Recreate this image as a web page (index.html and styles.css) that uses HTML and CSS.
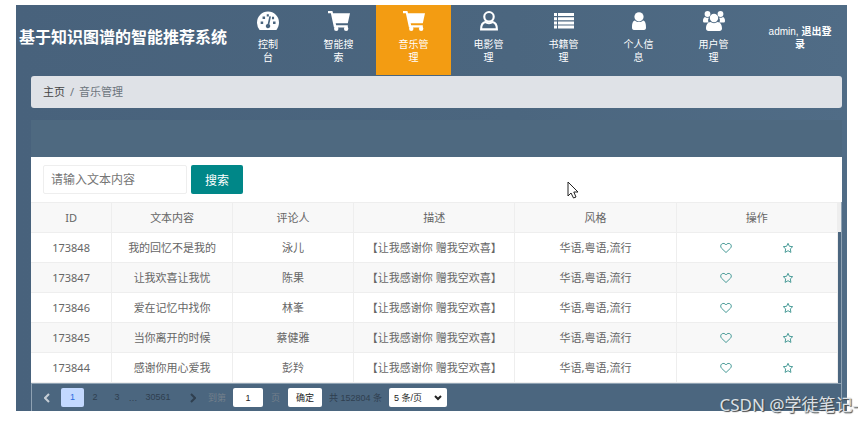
FILE: index.html
```
<!DOCTYPE html>
<html lang="zh-CN">
  <head>
    <meta charset="UTF-8" />
    <title>基于知识图谱的智能推荐系统</title>
    <link rel="stylesheet" href="styles.css">
  </head>
  <body>
    <svg class="sprite">
      <symbol id="cart" viewBox="0 0 20 18">
        <path d="M0 0h4l.6 2H20l-2 9H7l.4 1.8H18V15H5.400L2.600 2H0z"/>
        <circle cx="7.500" cy="16" r="2"/><circle cx="16.500" cy="16" r="2"/>
      </symbol>
      <symbol id="heart" viewBox="0 0 12 11">
        <path d="M6 10 1.600 5.800C.2 4.300.6 2.400 1.700 1.500 3.200.4 5 .9 6 2.400 7 .9 8.800.4 10.300 1.500c1.100.9 1.500 2.800.1 4.300z"/>
      </symbol>
      <symbol id="star" viewBox="0 0 12 12">
        <path d="m6 1.300 1.400 3 3.300.4-2.400 2.200.6 3.500L6 8.700l-2.900 1.700.6-3.500-2.400-2.200 3.300-.4z"/>
      </symbol>
    </svg>

    <div class="app">
      <header class="header">
        <h1 class="brand">基于知识图谱的智能推荐系统</h1>
        <nav class="nav">
          <a href="#" class="nav-first">
            <svg viewBox="0 0 21 18"><path fill-rule="evenodd" d="M2.500 17.500A10.400 10.400 0 0 1 0 10.500a10.500 10.500 0 0 1 21 0c0 2.700-.9 5.100-2.500 7zM3.500 9.500v2.400h2.400V9.500zM5.300 4.800v2.400h2.400V4.800zM15.300 9.500v2.400h2.400V9.500zM14.300 5v2.400h2V5zM9.300 2.600v2.200h2V2.600zM11.800 4.500l-1.600 7.300a2.100 2.100 0 1 0 1.600.4l1.500-7.400z"/></svg>
            <span>控制台</span>
          </a>
          <a href="#"><svg><use href="#cart"/></svg><span>智能搜索</span></a>
          <a href="#" class="active"><svg><use href="#cart"/></svg><span>音乐管理</span></a>
          <a href="#">
            <svg viewBox="0 0 18 19" class="line"><circle cx="9" cy="5.500" r="4.500"/><path d="M5.500 10.500C3 11 1.500 13.500 1.500 17.500h15c0-4-1.500-6.500-4-7-1.800 1.500-5.200 1.500-7 0z"/></svg>
            <span>电影管理</span>
          </a>
          <a href="#">
            <svg viewBox="0 0 22 18"><path d="M1 1h3v3H1zM5 1h16v3H5zM1 5.200h3v3H1zM5 5.200h16v3H5zM1 9.400h3v3H1zM5 9.400h16v3H5zM1 13.600h3v3H1zM5 13.600h16v3H5z"/></svg>
            <span>书籍管理</span>
          </a>
          <a href="#">
            <svg viewBox="0 -1 18 20"><circle cx="9" cy="4.800" r="4.600"/><path d="M5 8.500C2.500 9 2 12 2 15.500 2 17 2.500 18 4 18h10c1.500 0 2-1 2-2.500 0-3.500-.5-6.500-3-7-2 2-6 2-8 0z"/></svg>
            <span>个人信息</span>
          </a>
          <a href="#">
            <svg viewBox="0 0 22 20"><circle cx="4.500" cy="3" r="2.900"/><circle cx="17.500" cy="3" r="2.900"/><circle cx="11" cy="7" r="4.200"/><path d="M2 6C.7 6.500 0 8 0 10c0 1 .7 1.500 1.500 1.500h4C4.800 9.500 5 8 6 6.800 4.500 7 3 6.800 2 6zM20 6c1.300.5 2 2 2 4 0 1-.7 1.500-1.500 1.500h-4c.7-2 .5-3.500-.5-4.700 1.500.2 3 0 4-.8zM7.500 11C4.500 11 3 14 3 17.500 3 19 4 20 5.500 20h11c1.500 0 2.500-1 2.500-2.500 0-3.500-1.500-6.500-4.500-6.500-2 1.500-5 1.500-7 0z"/></svg>
            <span>用户管理</span>
          </a>
        </nav>
        <div class="user">admin, <a href="#">退出登录</a></div>
      </header>

      <main class="content">
        <div class="breadcrumb">
          <a href="#">主页</a><span>/</span><span>音乐管理</span>
        </div>

        <section class="panel">
          <div class="panel-head"></div>
          <form class="search">
            <input type="text" placeholder="请输入文本内容" aria-label="文本内容" />
            <button type="button">搜索</button>
          </form>
          <div class="table-box">
            <table>
              <colgroup>
                <col class="c-id"><col class="c-name"><col class="c-name"><col class="c-wide"><col class="c-wide"><col class="c-wide">
              </colgroup>
              <thead>
                <tr>
                  <th>ID</th>
                  <th>文本内容</th>
                  <th>评论人</th>
                  <th>描述</th>
                  <th>风格</th>
                  <th>操作</th>
                </tr>
              </thead>
              <tbody>
                <tr>
                  <td>173848</td>
                  <td>我的回忆不是我的</td>
                  <td>泳儿</td>
                  <td>【让我感谢你 赠我空欢喜】</td>
                  <td>华语,粤语,流行</td>
                  <td><div class="ops"><button aria-label="喜欢"><svg><use href="#heart"/></svg></button><button aria-label="收藏"><svg><use href="#star"/></svg></button></div></td>
                </tr>
                <tr>
                  <td>173847</td>
                  <td>让我欢喜让我忧</td>
                  <td>陈果</td>
                  <td>【让我感谢你 赠我空欢喜】</td>
                  <td>华语,粤语,流行</td>
                  <td><div class="ops"><button aria-label="喜欢"><svg><use href="#heart"/></svg></button><button aria-label="收藏"><svg><use href="#star"/></svg></button></div></td>
                </tr>
                <tr>
                  <td>173846</td>
                  <td>爱在记忆中找你</td>
                  <td>林峯</td>
                  <td>【让我感谢你 赠我空欢喜】</td>
                  <td>华语,粤语,流行</td>
                  <td><div class="ops"><button aria-label="喜欢"><svg><use href="#heart"/></svg></button><button aria-label="收藏"><svg><use href="#star"/></svg></button></div></td>
                </tr>
                <tr>
                  <td>173845</td>
                  <td>当你离开的时候</td>
                  <td>蔡健雅</td>
                  <td>【让我感谢你 赠我空欢喜】</td>
                  <td>华语,粤语,流行</td>
                  <td><div class="ops"><button aria-label="喜欢"><svg><use href="#heart"/></svg></button><button aria-label="收藏"><svg><use href="#star"/></svg></button></div></td>
                </tr>
                <tr>
                  <td>173844</td>
                  <td>感谢你用心爱我</td>
                  <td>彭羚</td>
                  <td>【让我感谢你 赠我空欢喜】</td>
                  <td>华语,粤语,流行</td>
                  <td><div class="ops"><button aria-label="喜欢"><svg><use href="#heart"/></svg></button><button aria-label="收藏"><svg><use href="#star"/></svg></button></div></td>
                </tr>
              </tbody>
            </table>
            <div class="gutter"></div>
          </div>

          <div class="pager">
            <a href="#" class="arrow prev" aria-label="上一页"><svg viewBox="0 0 6 10"><path d="M5 1 1 5l4 4"/></svg></a>
            <a href="#" class="current">1</a>
            <a href="#">2</a>
            <a href="#">3</a>
            <span class="dots">…</span>
            <a href="#" class="last">30561</a>
            <a href="#" class="arrow next" aria-label="下一页"><svg viewBox="0 0 6 10"><path d="m1 1 4 4-4 4"/></svg></a>
            <label for="page" class="muted">到第</label>
            <input id="page" type="text" value="1" />
            <span class="muted">页</span>
            <button type="button">确定</button>
            <span class="total">共 152804 条</span>
            <span class="limit">
              <select aria-label="每页条数"><option>5 条/页</option></select>
              <svg viewBox="0 0 8 6"><path d="m1 1 3 3 3-3"/></svg>
            </span>
          </div>
        </section>
      </main>
    </div>

    <svg class="cursor" viewBox="0 0 12 18"><path d="M1 1v14l3-3 2.500 5 2.500-1-2.200-5H11z"/></svg>
    <div class="watermark">CSDN @学徒笔记-</div>
  </body>
</html>
```
FILE: styles.css
```
* {
  box-sizing: border-box;
}
body {
  margin: 5px 11px 10px 16px;
  background: #fff;
  font-family: "Noto Sans", "Noto Sans CJK SC", sans-serif;
  font-size: 11px;
  color: #666;
}
a {
  color: inherit;
  text-decoration: none;
}
button, input, select {
  font-family: inherit;
  margin: 0;
}
.sprite {
  display: none;
}
.app {
  background: linear-gradient(90deg, #48627c, #4b667f 60%, #506c86);
}

/* header */
.header {
  display: flex;
  height: 70px;
  color: #fff;
}
.brand {
  flex: 1;
  margin: 0;
  padding-left: 3px;
  font-size: 16px;
  line-height: 64px;
  white-space: nowrap;
}
.nav {
  display: flex;
}
.nav a {
  width: 75px;
  padding: 6px 20px 0;
  font-size: 10px;
  line-height: 13px;
  text-align: center;
}
.nav .nav-first {
  width: 66px;
}
.nav .active {
  background: #f39c12;
}
.nav svg {
  display: block;
  width: 22px;
  height: 20px;
  margin: 0 auto 7px;
  fill: #fff;
}
.nav span {
  display: block;
}
.nav .line {
  fill: none;
  stroke: #fff;
  stroke-width: 2;
}
.user {
  width: 96px;
  padding: 20px 14px 0 16px;
  font-family: "Liberation Sans", "Noto Sans CJK SC", sans-serif;
  font-size: 10px;
  line-height: 13px;
  text-align: center;
}
.user a {
  font-weight: bold;
}

/* content */
.content {
  padding: 1px 5px 0 15px;
}
.breadcrumb {
  display: flex;
  gap: 5px;
  height: 32px;
  padding: 0 12px;
  line-height: 32px;
  background: #dfe2e7;
  border-radius: 3px;
  color: #6c757d;
}
.breadcrumb a {
  color: #444;
}
.panel {
  margin-top: 12px;
}
.panel-head {
  height: 37px;
  background: #4e6980;
}
.search {
  display: flex;
  gap: 4px;
  padding: 8px 12px;
  background: #fff;
}
.search input {
  width: 144px;
  height: 29px;
  padding: 0 7px;
  border: 1px solid #eee;
  border-radius: 2px;
  font-size: 12px;
}
.search input::placeholder {
  color: #757575;
}
.search button {
  width: 52px;
  height: 29px;
  padding: 0;
  border: 0;
  border-radius: 2px;
  background: #008788;
  color: #fff;
  font-size: 12px;
}

/* table */
.table-box {
  display: flex;
  border-right: 1px solid #8fa2b3;
}
table {
  flex: 1;
  table-layout: fixed;
  border-collapse: collapse;
  background: #fff;
}
.c-id {
  width: 10%;
}
.c-name {
  width: 15%;
}
.c-wide {
  width: 20%;
}
th, td {
  height: 30px;
  padding: 0;
  border: 1px solid #eee;
  border-left: 0;
  font-weight: normal;
  line-height: 16px;
  text-align: center;
}
th {
  background: #f8f8f8;
}
tbody tr:nth-child(even) {
  background: #f8f8f8;
}
.gutter {
  width: 3px;
  background: #4b667f;
  border-top: 30px solid #eee;
}
.ops {
  display: flex;
  justify-content: center;
  gap: 50px;
}
.ops button {
  display: flex;
  padding: 0;
  border: 0;
  background: none;
}
.ops svg {
  width: 12px;
  height: 12px;
  fill: none;
  stroke: #4a9c98;
}

/* pagination */
.pager {
  display: flex;
  align-items: center;
  height: 28px;
  padding-left: 4px;
  border: 1px solid #8fa2b3;
  border-width: 1px 1px 0;
  background: #4b667f;
  font-family: "Liberation Sans", "Noto Sans CJK SC", sans-serif;
  font-size: 9px;
  color: #2f3f4f;
}
.pager a {
  width: 22px;
  line-height: 19px;
  text-align: center;
}
.pager .current {
  width: 23px;
  margin-left: 3px;
  border-radius: 2px;
  background: #c3d9ff;
  color: #2b6be0;
}
.pager .dots {
  width: 10px;
  text-align: center;
}
.pager .last {
  width: 40px;
}
.pager .arrow {
  display: flex;
  justify-content: center;
}
.pager .arrow svg {
  width: 6px;
  height: 10px;
  fill: none;
  stroke: #2f3f4f;
  stroke-width: 2;
}
.pager .prev svg {
  stroke: #c6ced6;
}
.pager .next {
  margin-left: 4px;
}
.pager .muted {
  padding: 0 8px;
  color: #74808c;
}
.pager label.muted {
  padding: 0 7px 0 4px;
}
.pager input, .pager button, .pager select {
  height: 19px;
  padding: 0;
  border: 0;
  border-radius: 2px;
  background: #fff;
  color: #222;
  font-size: 9px;
  text-align: center;
}
.pager input {
  width: 30px;
}
.pager button {
  width: 34px;
}
.pager .total {
  padding: 0 7px;
}
.limit {
  position: relative;
}
.pager select {
  display: block;
  width: 58px;
  padding-left: 5px;
  appearance: none;
  text-align: left;
}
.limit svg {
  position: absolute;
  right: 5px;
  top: 7px;
  width: 8px;
  height: 6px;
  fill: none;
  stroke: #222;
  stroke-width: 2;
}

/* over the page */
.cursor {
  position: absolute;
  left: 567px;
  top: 181px;
  width: 12px;
  height: 18px;
  fill: #fff;
  stroke: #222;
}
.watermark {
  position: absolute;
  right: 0;
  bottom: 4px;
  font-size: 17px;
  line-height: 24px;
  color: #dde1e5;
  text-shadow: 1px 1px 1px #444;
  white-space: nowrap;
}
```
